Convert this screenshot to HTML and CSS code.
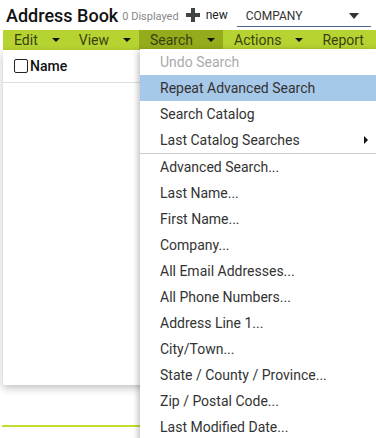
FILE: index.html
```html
<!DOCTYPE html>
<html lang="en">
<head>
    <meta charset="UTF-8">
    <meta name="viewport" content="width=device-width, initial-scale=1.0">
    <title>Address Book</title>
    <link rel="stylesheet" href="styles.css">
</head>
<body>
    <div class="topbar">
        <h1>Address Book</h1>
        <span class="count">0 Displayed</span>
        <button class="new-btn" type="button">
            <svg width="14" height="14" viewBox="0 0 14 14"><path d="M5 0h4v5h5v4H9v5H5V9H0V5h5z" fill="#444"/></svg>
            new
        </button>
        <div class="picker">
            <span>COMPANY</span>
            <span class="picker-arrow"></span>
        </div>
    </div>

    <nav class="menubar">
        <div class="menu-item">Edit <span class="caret"></span></div>
        <div class="menu-item">View <span class="caret"></span></div>
        <div class="menu-item active">Search <span class="caret"></span></div>
        <div class="menu-item">Actions <span class="caret"></span></div>
        <div class="menu-item">Report</div>
    </nav>

    <div class="content">
        <div class="card">
            <div class="card-head">
                <span class="checkbox"></span>Name
            </div>
        </div>
        <div class="rule"></div>
    </div>

    <ul class="dropdown">
        <li class="disabled">Undo Search</li>
        <li class="hover">Repeat Advanced Search</li>
        <li>Search Catalog</li>
        <li class="sub">Last Catalog Searches</li>
        <li class="sep"></li>
        <li>Advanced Search...</li>
        <li>Last Name...</li>
        <li>First Name...</li>
        <li>Company...</li>
        <li>All Email Addresses...</li>
        <li>All Phone Numbers...</li>
        <li>Address Line 1...</li>
        <li>City/Town...</li>
        <li>State / County / Province...</li>
        <li>Zip / Postal Code...</li>
        <li>Last Modified Date...</li>
    </ul>
</body>
</html>
```

FILE: styles.css
```css
body {
    margin: 0;
    font-family: Roboto, "Liberation Sans", sans-serif;
    background-color: #fff;
    color: #333;
    width: 376px;
    height: 438px;
    overflow: hidden;
    position: relative;
}

.topbar {
    display: flex;
    align-items: center;
    height: 30px;
    padding-left: 6px;
    white-space: nowrap;
}

.topbar h1 {
    flex-shrink: 0;
    margin: 0;
    font-size: 18px;
    font-weight: 500;
    color: #111;
}

.count {
    flex-shrink: 0;
    margin-left: 4px;
    margin-top: 3px;
    font-size: 11px;
    color: #888;
}

.new-btn {
    flex-shrink: 0;
    display: flex;
    align-items: center;
    gap: 6px;
    margin-left: 7px;
    padding: 0;
    border: none;
    background: none;
    font-family: inherit;
    font-size: 12px;
    color: #222;
}

.picker {
    flex-shrink: 0;
    box-sizing: border-box;
    display: flex;
    align-items: center;
    justify-content: space-between;
    width: 134px;
    height: 22px;
    margin-left: 9px;
    margin-top: 2px;
    padding: 0 12px 0 9px;
    border-bottom: 1px solid #4a6b8c;
    font-size: 12px;
    color: #333;
}

.picker-arrow {
    width: 0;
    height: 0;
    border-left: 5px solid transparent;
    border-right: 5px solid transparent;
    border-top: 6px solid #333;
}

.menubar {
    display: flex;
    height: 20px;
    margin-left: 3px;
    background-color: #b6d431;
    white-space: nowrap;
}

.menu-item {
    display: flex;
    align-items: center;
    padding: 0 8px 0 11px;
    font-size: 14px;
    color: #3a3f10;
}

.menu-item.active {
    background-color: #94ab1c;
}

.caret {
    margin-left: 14px;
    width: 0;
    height: 0;
    border-left: 4px solid transparent;
    border-right: 4px solid transparent;
    border-top: 4px solid #111;
}

.content {
    padding: 0 0 0 3px;
}

.card {
    height: 335px;
    background-color: #fff;
    box-shadow: 0 3px 8px rgba(0, 0, 0, 0.25);
}

.card-head {
    display: flex;
    align-items: center;
    height: 32px;
    padding-left: 11px;
    border-bottom: 1px solid #ddd;
    font-size: 14px;
    font-weight: 500;
    color: #111;
}

.checkbox {
    width: 12px;
    height: 12px;
    border: 1px solid #222;
    border-radius: 2px;
    margin-right: 2px;
}

.rule {
    margin-top: 40px;
    margin-left: -1px;
    height: 2px;
    background-color: #c5dc2c;
}

.dropdown {
    position: absolute;
    top: 49px;
    left: 140px;
    width: 240px;
    margin: 0;
    padding: 0;
    list-style: none;
    background-color: #fff;
    box-shadow: -2px 2px 6px rgba(0, 0, 0, 0.25);
}

.dropdown li {
    position: relative;
    height: 26px;
    line-height: 26px;
    padding-left: 20px;
    font-size: 14px;
    color: #333;
}

.dropdown li.disabled {
    color: #aaa;
}

.dropdown li.hover {
    background-color: #a6c8e9;
}

.dropdown li.sub::after {
    content: "";
    position: absolute;
    right: 12px;
    top: 9px;
    border-top: 4px solid transparent;
    border-bottom: 4px solid transparent;
    border-left: 4px solid #111;
}

.dropdown li.sep {
    height: 1px;
    padding: 0;
    background-color: #ccc;
}
```
